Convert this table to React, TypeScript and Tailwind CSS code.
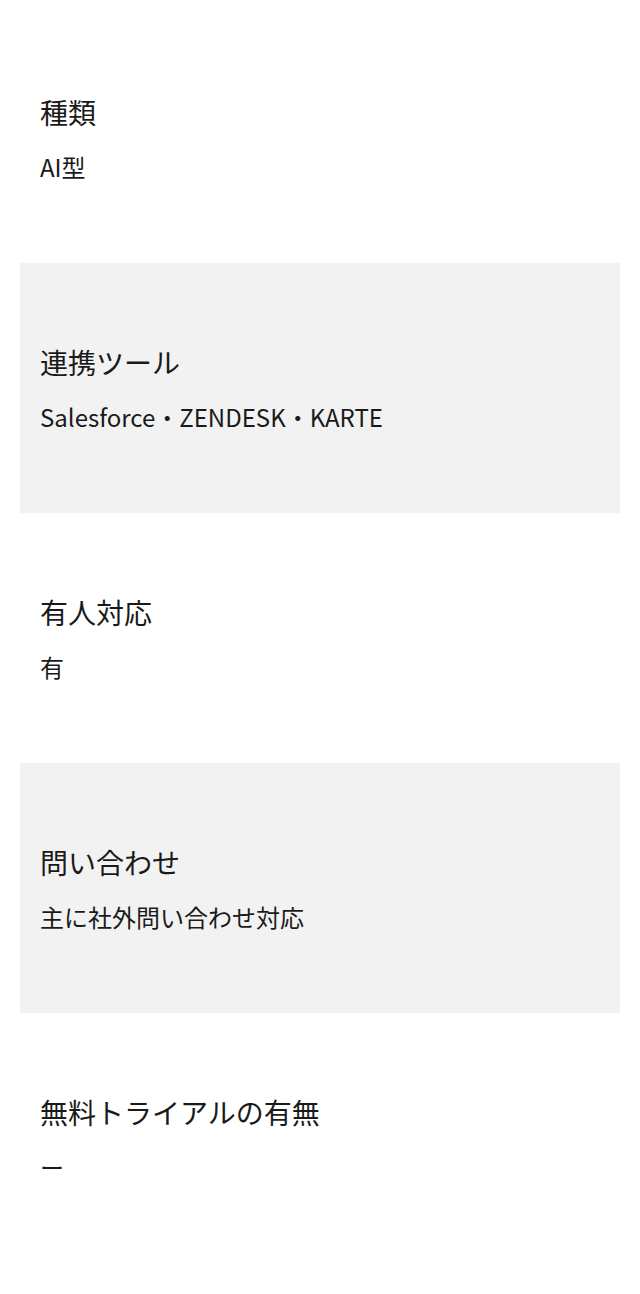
export default function App() {
  const items = [
    { h: "種類", v: "AI型" },
    { h: "連携ツール", v: "Salesforce・ZENDESK・KARTE" },
    { h: "有人対応", v: "有" },
    { h: "問い合わせ", v: "主に社外問い合わせ対応" },
    { h: "無料トライアルの有無", v: "ー" },
  ];
  return (
    <div
      className="min-h-[1294px] bg-white px-[20px] pt-[13px] text-[#1a1a1a]"
      style={{ fontFamily: '"Noto Sans CJK JP", "Noto Sans", sans-serif' }}
    >
      {items.map((it, i) => (
        <div
          key={i}
          className={`flex h-[250px] flex-col justify-center px-[20px] ${i % 2 === 1 ? "bg-[#f2f2f2]" : "bg-white"}`}
        >
          <div className="text-[28px] leading-[42px]">{it.h}</div>
          <div className="mt-[16px] text-[24px] leading-[36px]">{it.v}</div>
        </div>
      ))}
    </div>
  );
}
